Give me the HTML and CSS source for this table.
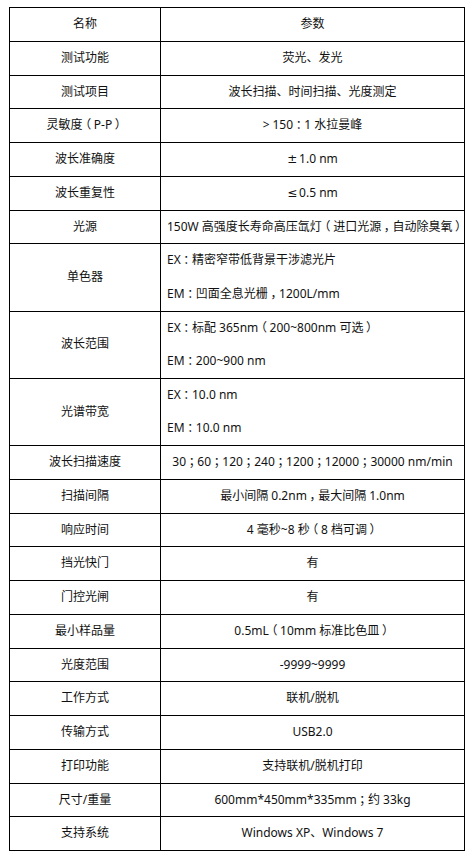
FILE: index.html
```html
<!DOCTYPE html>
<html lang="zh-CN">
<head>
<meta charset="utf-8">
<title>参数</title>
<link rel="stylesheet" href="styles.css">
</head>
<body>
<table class="spec">
  <colgroup><col class="c-name"><col class="c-val"></colgroup>
  <tr><td>名称</td><td>参数</td></tr>
  <tr><td>测试功能</td><td>荧光、发光</td></tr>
  <tr><td>测试项目</td><td>波长扫描、时间扫描、光度测定</td></tr>
  <tr><td>灵敏度<span class="pu">（</span>P-P<span class="pu">）</span></td><td><span class="gt">&gt;</span>150<span class="pu">：</span>1 水拉曼峰</td></tr>
  <tr><td>波长准确度</td><td><span class="sym">±</span>1.0 nm</td></tr>
  <tr><td>波长重复性</td><td><span class="sym">≤</span>0.5 nm</td></tr>
  <tr><td>光源</td><td>150W 高强度长寿命高压氙灯<span class="pu">（</span>进口光源<span class="pu">，</span>自动除臭氧<span class="pu">）</span></td></tr>
  <tr><td>单色器</td><td class="multi"><div class="ln">EX<span class="pu">：</span>精密窄带低背景干涉滤光片</div><div class="ln">EM<span class="pu">：</span>凹面全息光栅<span class="pu">，</span>1200L/mm</div></td></tr>
  <tr><td>波长范围</td><td class="multi"><div class="ln">EX<span class="pu">：</span>标配 365nm<span class="pu">（</span>200~800nm 可选<span class="pu">）</span></div><div class="ln">EM<span class="pu">：</span>200~900 nm</div></td></tr>
  <tr><td>光谱带宽</td><td class="multi"><div class="ln">EX<span class="pu">：</span>10.0 nm</div><div class="ln">EM<span class="pu">：</span>10.0 nm</div></td></tr>
  <tr><td>波长扫描速度</td><td>30<span class="pu">；</span>60<span class="pu">；</span>120<span class="pu">；</span>240<span class="pu">；</span>1200<span class="pu">；</span>12000<span class="pu">；</span>30000 nm/min</td></tr>
  <tr><td>扫描间隔</td><td>最小间隔 0.2nm<span class="pu">，</span>最大间隔 1.0nm</td></tr>
  <tr><td>响应时间</td><td>4 毫秒~8 秒<span class="pu">（</span>8 档可调<span class="pu">）</span></td></tr>
  <tr><td>挡光快门</td><td>有</td></tr>
  <tr><td>门控光闸</td><td>有</td></tr>
  <tr><td>最小样品量</td><td>0.5mL<span class="pu">（</span>10mm 标准比色皿<span class="pu">）</span></td></tr>
  <tr><td>光度范围</td><td>-9999~9999</td></tr>
  <tr><td>工作方式</td><td>联机/脱机</td></tr>
  <tr><td>传输方式</td><td>USB2.0</td></tr>
  <tr><td>打印功能</td><td>支持联机/脱机打印</td></tr>
  <tr><td>尺寸/重量</td><td>600mm*450mm*335mm<span class="pu">；</span>约 33kg</td></tr>
  <tr><td>支持系统</td><td>Windows XP、Windows 7</td></tr>
</table>
</body>
</html>
```
FILE: styles.css
```css
html, body {
  margin: 0;
  padding: 0;
  background: #fff;
}
body {
  padding: 7px 9px;
  font-family: "Noto Sans", "Noto Sans CJK SC", sans-serif;
  font-size: 12px;
  color: #111;
}
.spec {
  border-collapse: collapse;
  table-layout: fixed;
  width: 455px;
}
.c-name { width: 151px; }
.c-val { width: 304px; }
.spec td {
  border: 1px solid #000;
  padding: 6px 6px;
  line-height: 20.75px;
  text-align: center;
  vertical-align: middle;
  white-space: nowrap;
}
.spec td.multi {
  text-align: left;
}
.spec td.multi .ln + .ln {
  margin-top: 12.8px;
}
/* full-width punctuation: half-width glyph, centred in an em of space */
.pu {
  font-feature-settings: "halt" 1;
  padding: 0 0.22em;
}
.gt {
  padding-right: 0.25em;
}
.sym {
  font-family: "DejaVu Sans", sans-serif;
  padding-right: 0.15em;
}
```
